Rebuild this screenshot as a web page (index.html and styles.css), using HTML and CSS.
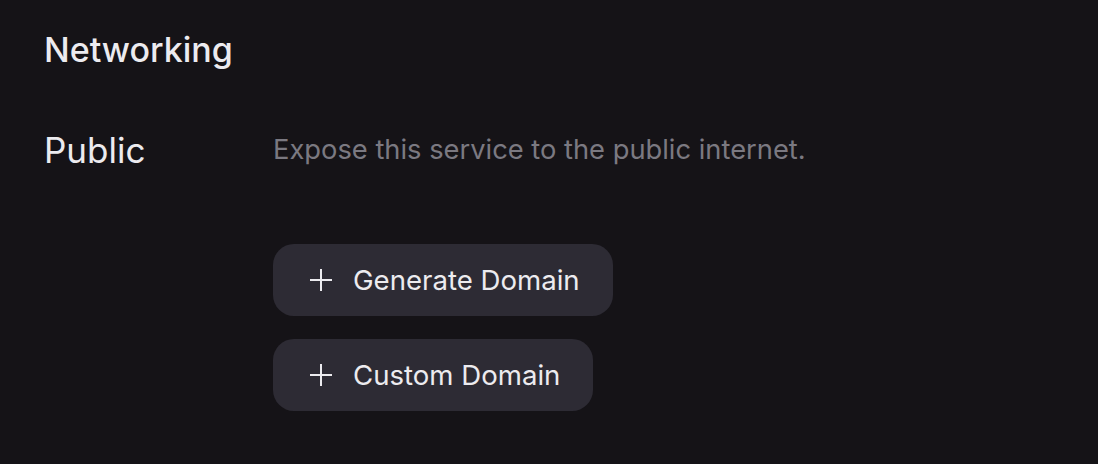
FILE: index.html
```html
<!DOCTYPE html>
<html lang="en">
<head>
    <meta charset="UTF-8">
    <meta name="viewport" content="width=device-width, initial-scale=1.0">
    <title>Networking</title>
    <link rel="stylesheet" href="styles.css">
</head>
<body>
    <div class="section">
        <h2 class="title">Networking</h2>
        <div class="row">
            <div class="label">Public</div>
            <div class="content">
                <p class="desc">Expose this service to the public internet.</p>
                <div class="actions">
                    <button class="btn" type="button">
                        <svg class="plus" viewBox="0 0 24 24" width="24" height="24"><path d="M12 1v22M1 12h22"/></svg>
                        Generate Domain
                    </button>
                    <button class="btn" type="button">
                        <svg class="plus" viewBox="0 0 24 24" width="24" height="24"><path d="M12 1v22M1 12h22"/></svg>
                        Custom Domain
                    </button>
                </div>
            </div>
        </div>
    </div>
</body>
</html>
```

FILE: styles.css
```css
body {
    margin: 0;
    background-color: #151317;
    font-family: Inter, "Noto Sans", sans-serif;
    color: #ecebef;
}
.section {
    padding: 28px 44px;
}
.title {
    margin: 0;
    font-size: 34px;
    font-weight: 500;
    line-height: 44px;
}
.row {
    display: flex;
    margin-top: 56px;
}
.label {
    width: 229px;
    font-size: 35px;
    line-height: 44px;
}
.content {
    display: flex;
    flex-direction: column;
}
.desc {
    margin: 0;
    color: #7b7981;
    font-size: 27.3px;
    line-height: 44px;
}
.actions {
    display: flex;
    flex-direction: column;
    align-items: flex-start;
    gap: 23px;
    margin-top: 72px;
}
.btn {
    display: flex;
    align-items: center;
    gap: 20px;
    height: 72px;
    padding: 0 33px 0 36px;
    border: none;
    border-radius: 21px;
    background-color: #2d2b34;
    color: #ecebef;
    font-family: inherit;
    font-size: 27.6px;
}
.plus {
    fill: none;
    stroke: currentColor;
    stroke-width: 2;
}
```
